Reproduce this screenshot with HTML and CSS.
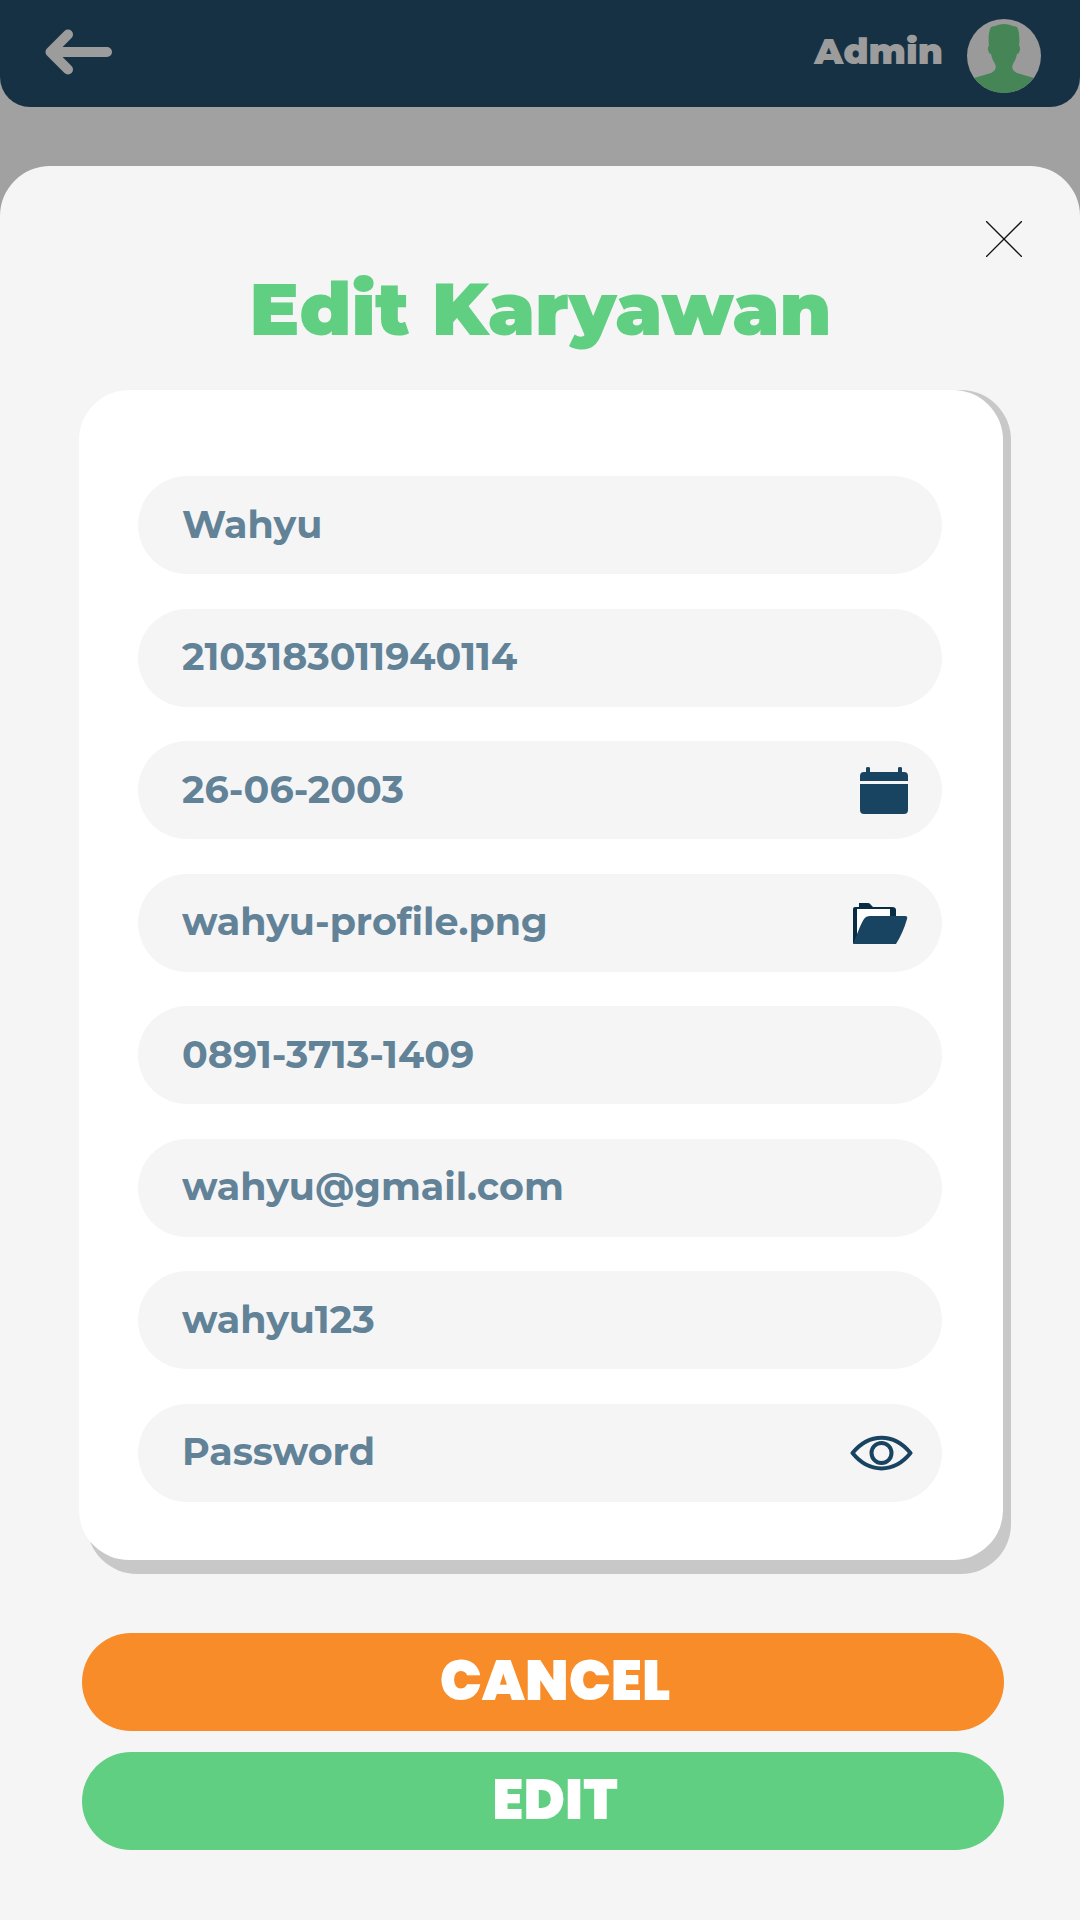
FILE: index.html
```html
<!DOCTYPE html>
<html lang="id">
<head>
<meta charset="utf-8">
<meta name="viewport" content="width=device-width, initial-scale=1">
<title>Edit Karyawan</title>
<link rel="stylesheet" href="styles.css">
</head>
<body>
<div class="page">
  <header class="topbar">
    <button class="icon-button back" type="button" aria-label="Kembali">
      <svg width="68" height="46" viewBox="0 0 68 46" fill="none" stroke="currentColor" stroke-width="10" stroke-linecap="round" stroke-linejoin="round"><path d="M23 5.500 5.500 23 23 40.500M5.500 23H62"/></svg>
    </button>
    <div class="account">
      <span class="account-name">Admin</span>
      <svg class="avatar" width="74" height="74" viewBox="0 0 74 74" aria-hidden="true">
        <defs><clipPath id="disc"><circle cx="37" cy="37" r="37"/></clipPath></defs>
        <g clip-path="url(#disc)">
          <rect width="74" height="74" fill="#9a9a9a"/>
          <path fill="#458556" d="M22 27C21 20 22 13 23 10q1-3 5-3 9-4 18 0 4 0 5 3c1 3 2 10 1 17 2 0 1 8-2 8-1 5-3 8-4 10-2 4 0 7 4 9l17 5v18H7V59l17-5c4-2 6-5 4-9-1-2-3-5-4-10-3 0-4-8-2-8Z"/>
        </g>
      </svg>
    </div>
  </header>

  <main class="sheet">
    <button class="icon-button close" type="button" aria-label="Tutup">
      <svg width="36" height="36" viewBox="0 0 36 36" stroke="#111" stroke-width="1.300"><path d="M0 0 36 36M36 0 0 36"/></svg>
    </button>
    <h1 class="title">Edit Karyawan</h1>

    <form class="form">
      <div class="card">
        <div class="field"><input class="input" type="text" aria-label="Nama" value="Wahyu"></div>
        <div class="field"><input class="input" type="text" aria-label="NIK" value="2103183011940114"></div>
        <div class="field">
          <input class="input" type="text" aria-label="Tanggal lahir" value="26-06-2003">
          <button class="icon-button" type="button" aria-label="Pilih tanggal">
            <svg width="64" height="64" viewBox="0 0 64 64" fill="#184361"><path d="M11 23v-5q0-4 4-4h2v-4q0-1 2-1t2 1v4h28v-4q0-1 2-1t2 1v4h2q4 0 4 4v5ZM11 26h48v26q0 4-4 4H15q-4 0-4-4Z"/></svg>
          </button>
        </div>
        <div class="field">
          <input class="input" type="text" aria-label="Foto profil" value="wahyu-profile.png">
          <button class="icon-button" type="button" aria-label="Pilih berkas">
            <svg width="64" height="64" viewBox="0 0 64 64"><path fill="#082c44" d="M4 52V18q0-2 2-2h4v-4h9q2 0 3 2l2 2h19q4 0 4 3v8L8 52Z"/><path fill="#fff" d="M8 18h33v9L8 44Z"/><path fill="#184361" d="M4 53C8 44 11 34 15 28q2-3 6-3l35 0q3 0 2 3-4 14-11 25Z"/></svg>
          </button>
        </div>
        <div class="field"><input class="input" type="tel" aria-label="Nomor telepon" value="0891-3713-1409"></div>
        <div class="field"><input class="input" type="email" aria-label="Email" value="wahyu@gmail.com"></div>
        <div class="field"><input class="input" type="text" aria-label="Nama pengguna" value="wahyu123"></div>
        <div class="field">
          <input class="input" type="password" aria-label="Password" placeholder="Password">
          <button class="icon-button" type="button" aria-label="Tampilkan password">
            <svg width="64" height="64" viewBox="0 0 64 64" fill="none" stroke="#184361" stroke-width="4"><path stroke-linejoin="round" d="M3.500 32C20 11.500 45 11.500 61.500 32 45 52.500 20 52.500 3.500 32Z"/><circle cx="32.500" cy="32" r="10"/></svg>
          </button>
        </div>
      </div>
      <div class="actions">
        <button class="action cancel" type="button">CANCEL</button>
        <button class="action edit" type="submit">EDIT</button>
      </div>
    </form>
  </main>
</div>
</body>
</html>
```
FILE: styles.css
```css
* {
  box-sizing: border-box;
}

body {
  margin: 0;
  background: #a1a1a1;
  font-family: Montserrat, Inter, "Liberation Sans", sans-serif;
}

button,
input {
  font: inherit;
}

.page {
  display: flex;
  flex-direction: column;
  gap: 59px;
  min-height: 100vh;
}

.topbar {
  display: flex;
  justify-content: space-between;
  align-items: flex-start;
  padding: 19px 39px 14px 45px;
  border-radius: 0 0 30px 30px;
  background: #173144;
  color: #9c9c9c;
}

.icon-button {
  display: flex;
  align-items: center;
  justify-content: center;
  flex: none;
  padding: 0;
  border: 0;
  background: none;
  color: inherit;
  cursor: pointer;
}

.back {
  height: 66px;
}

.account {
  display: flex;
  gap: 24px;
}

.account-name {
  font-size: 36px;
  font-weight: 900;
  line-height: 64px;
}

.sheet {
  display: flex;
  flex-direction: column;
  flex: 1;
  padding: 55px 58px 70px 59px;
  border-radius: 50px 50px 0 0;
  background: #f5f5f5;
}

.close {
  align-self: flex-end;
}

.title {
  margin: 14px 0 43px;
  color: #60cf81;
  font-size: 74px;
  font-weight: 900;
  line-height: 76px;
  text-align: center;
}

.form {
  display: flex;
  flex-direction: column;
  flex: 1;
  gap: 73px;
}

.card {
  display: flex;
  flex-direction: column;
  justify-content: space-between;
  flex: 1;
  gap: 32px;
  margin: 0 19px 0 20px;
  padding: 86px 61px 58px 59px;
  border-radius: 50px;
  background: #fff;
  box-shadow: 8px 0 #c8c8c8, 8px 14px #c8c8c8;
}

.field {
  display: flex;
  align-items: center;
  height: 98px;
  padding: 0 29px 0 44px;
  border-radius: 49px;
  background: #f5f5f5;
}

.input {
  flex: 1;
  min-width: 0;
  height: 98px;
  padding: 0 0 2px;
  border: 0;
  outline: 0;
  background: none;
  color: #628297;
  font-size: 38px;
  font-weight: 700;
}

.input::placeholder {
  color: #628297;
  opacity: 1;
}

.actions {
  display: flex;
  flex-direction: column;
  gap: 21px;
  margin: 0 18px 0 23px;
}

.action {
  height: 98px;
  padding: 0 0 4px 24px;
  border: 0;
  border-radius: 49px;
  color: #fff;
  font-family: Poppins, Montserrat, Inter, sans-serif;
  font-size: 56px;
  font-weight: 900;
  cursor: pointer;
}

.cancel {
  background: #f78c29;
}

.edit {
  background: #60cf81;
}
```
